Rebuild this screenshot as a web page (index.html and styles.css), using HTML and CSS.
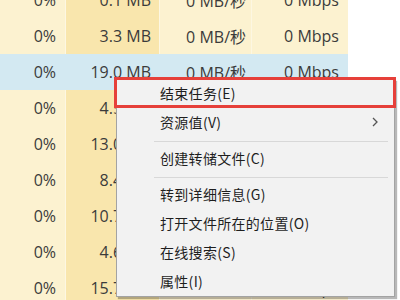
FILE: index.html
```html
<!DOCTYPE html>
<html lang="zh-CN">
<head>
    <meta charset="UTF-8">
    <title>任务管理器</title>
    <link rel="stylesheet" href="styles.css">
</head>
<body>
    <div class="table">
        <div class="row"><div class="cell cpu">0%</div><div class="cell mem">0.1 MB</div><div class="cell disk">0 MB/秒</div><div class="cell net">0 Mbps</div></div>
        <div class="row"><div class="cell cpu">0%</div><div class="cell mem">3.3 MB</div><div class="cell disk">0 MB/秒</div><div class="cell net">0 Mbps</div></div>
        <div class="row selected"><div class="cell cpu">0%</div><div class="cell mem">19.0 MB</div><div class="cell disk">0 MB/秒</div><div class="cell net">0 Mbps</div></div>
        <div class="row"><div class="cell cpu">0%</div><div class="cell mem">4.5 MB</div><div class="cell disk">0 MB/秒</div><div class="cell net">0 Mbps</div></div>
        <div class="row"><div class="cell cpu">0%</div><div class="cell mem">13.0 MB</div><div class="cell disk">0 MB/秒</div><div class="cell net">0 Mbps</div></div>
        <div class="row"><div class="cell cpu">0%</div><div class="cell mem">8.4 MB</div><div class="cell disk">0 MB/秒</div><div class="cell net">0 Mbps</div></div>
        <div class="row"><div class="cell cpu">0%</div><div class="cell mem">10.7 MB</div><div class="cell disk">0 MB/秒</div><div class="cell net">0 Mbps</div></div>
        <div class="row"><div class="cell cpu">0%</div><div class="cell mem">4.6 MB</div><div class="cell disk">0 MB/秒</div><div class="cell net">0 Mbps</div></div>
        <div class="row"><div class="cell cpu">0%</div><div class="cell mem">15.7 MB</div><div class="cell disk">0 MB/秒</div><div class="cell net">0 Mbps</div></div>
    </div>

    <!-- 右键菜单 -->
    <div class="menu">
        <div class="item">结束任务(E)</div>
        <div class="item">资源值(V)
            <svg class="arrow" width="6" height="10" viewBox="0 0 6 10"><path d="M1 1 L5 5 L1 9" fill="none" stroke="#555" stroke-width="1.3"/></svg>
        </div>
        <div class="sep"></div>
        <div class="item">创建转储文件(C)</div>
        <div class="sep"></div>
        <div class="item">转到详细信息(G)</div>
        <div class="item">打开文件所在的位置(O)</div>
        <div class="item">在线搜索(S)</div>
        <div class="item">属性(I)</div>
    </div>
    <div class="mark"></div>
</body>
</html>
```

FILE: styles.css
```css
body {
    margin: 0;
    width: 400px;
    height: 300px;
    overflow: hidden;
    background: #ffffff;
    font-family: 'Open Sans', 'Noto Sans CJK SC', sans-serif;
}
.table {
    margin-top: -18px;
}
.row {
    display: flex;
    height: 36px;
    align-items: center;
    font-size: 16px;
    color: #3b3b3b;
}
.cell {
    height: 100%;
    display: flex;
    align-items: center;
    justify-content: flex-end;
    box-sizing: border-box;
    background: #fcf2d0;
    border-right: 1px solid #fdf7e2;
}
.cpu { width: 66px; padding-right: 9px; }
.mem { width: 94px; padding-right: 8px; background: #f9e6ad; }
.disk { width: 92px; padding-right: 5px; }
.net { width: 96px; padding-right: 9px; border-right: none; }
.selected .cell {
    background: #d3e9f2;
    border-right-color: #d3e9f2;
}

/* 右键菜单 */
.menu {
    position: absolute;
    left: 116px;
    top: 79px;
    width: 277px;
    height: 216px;
    background: #f2f2f2;
    border: 1px solid #a3a3a3;
    box-shadow: 2px 2px 1px rgba(0, 0, 0, 0.28);
    display: flex;
    flex-direction: column;
    font-family: 'Noto Sans CJK SC', sans-serif;
    font-size: 14px;
    color: #1e1e1e;
}
.item {
    height: 29px;
    box-sizing: border-box;
    padding-bottom: 4px;
    flex-shrink: 0;
    display: flex;
    align-items: center;
    padding-left: 43px;
    letter-spacing: 0.3px;
    position: relative;
}
.arrow {
    position: absolute;
    right: 16px;
    top: 8px;
}
.sep {
    height: 1px;
    margin: 3px 6px 3px 37px;
    background: #d8d8d8;
    flex-shrink: 0;
}
.mark {
    position: absolute;
    left: 114px;
    top: 77px;
    width: 276px;
    height: 25px;
    border: 3px solid #e6403a;
}
```
